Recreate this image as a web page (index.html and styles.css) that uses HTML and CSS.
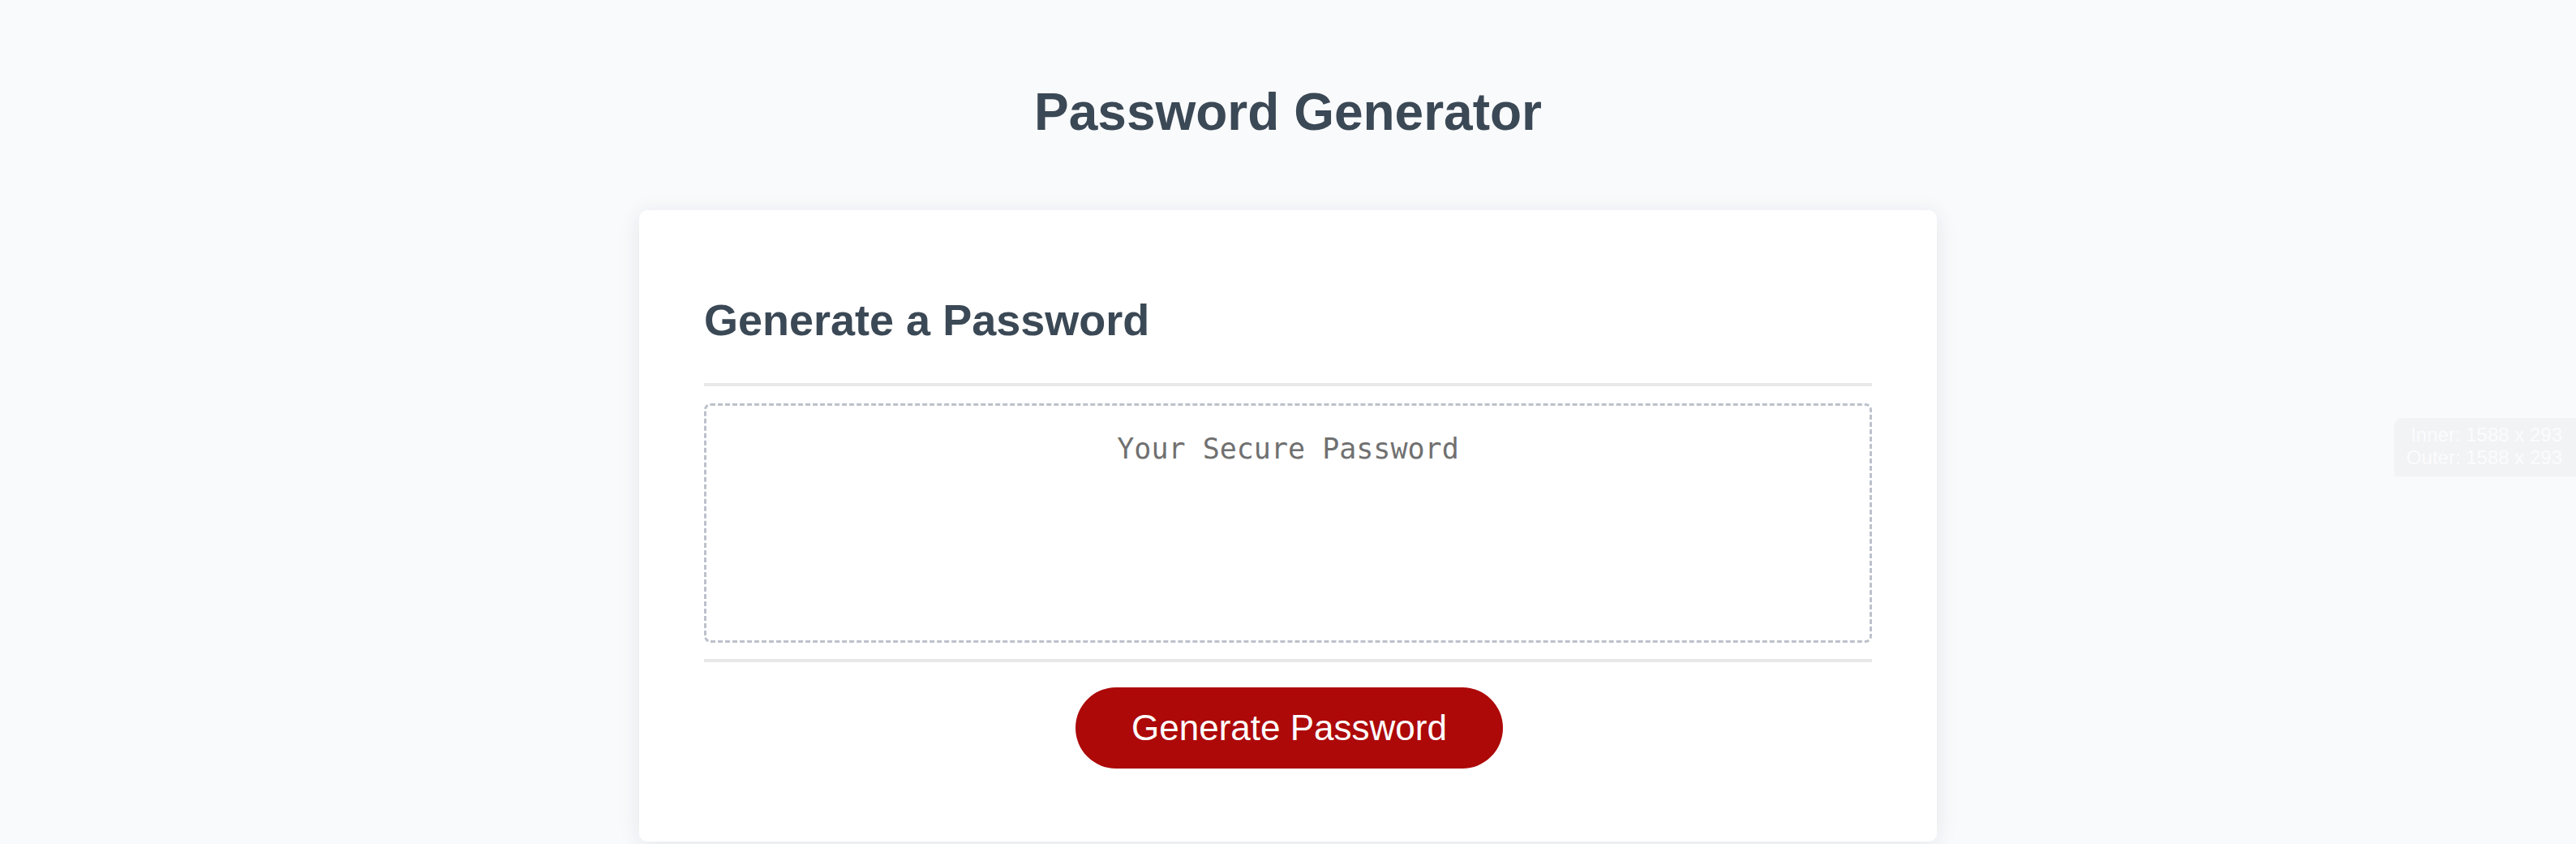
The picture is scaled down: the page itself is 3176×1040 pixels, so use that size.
FILE: index.html
```html
<!DOCTYPE html>
<html lang="en">
<head>
<meta charset="utf-8">
<title>Password Generator</title>
<link rel="stylesheet" href="styles.css">
</head>
<body>
<div class="size-overlay">
  <div>Inner: 1588 x 293</div>
  <div>Outer: 1588 x 293</div>
</div>
<header class="page-header">
  <h1 class="page-title">Password Generator</h1>
</header>
<main class="card">
  <h2 class="card-title">Generate a Password</h2>
  <div class="divider"></div>
  <div class="password-box" id="password">Your Secure Password</div>
  <div class="divider divider-bottom"></div>
  <button class="generate-btn" type="button">Generate Password</button>
</main>
</body>
</html>
```

FILE: styles.css
```css
html, body {
  margin: 0;
  padding: 0;
}

body {
  background: #f9fafc;
  font-family: "Liberation Sans", Arial, sans-serif;
  color: #3b4855;
  min-height: 1040px;
  overflow: hidden;
}

.page-header {
  padding-top: 100px;
}

.page-title {
  margin: 0;
  font-size: 64px;
  line-height: 1.2;
  font-weight: 700;
  text-align: center;
  color: #3b4855;
}

.card {
  box-sizing: border-box;
  width: 1600px;
  margin: 82px auto 0;
  padding: 80px 80px 90px;
  background: #ffffff;
  border-radius: 10px;
  box-shadow: 0 4px 28px rgba(20, 30, 50, 0.09);
  display: flex;
  flex-direction: column;
}

.card-title {
  margin: 23px 0 45px;
  font-size: 54px;
  line-height: 1.2;
  font-weight: 700;
  color: #3b4855;
}

.divider {
  height: 4px;
  background: #e8e8e8;
}

.password-box {
  box-sizing: border-box;
  margin-top: 21px;
  height: 295px;
  border: 3px dashed #bcc2ca;
  border-radius: 8px;
  padding-top: 32px;
  text-align: center;
  font-family: "DejaVu Sans Mono", "Liberation Mono", monospace;
  font-size: 35px;
  line-height: 1.2;
  color: #707070;
}

.divider-bottom {
  margin-top: 20px;
}

.generate-btn {
  align-self: center;
  margin-top: 31px;
  margin-left: 3px;
  height: 100px;
  padding: 0 69px;
  border: none;
  border-radius: 50px;
  background: #ad0909;
  color: #ffffff;
  font-family: "Liberation Sans", Arial, sans-serif;
  font-size: 44px;
  line-height: 1;
  cursor: pointer;
}

.size-overlay {
  position: absolute;
  top: 515px;
  right: 0;
  box-sizing: border-box;
  width: 224px;
  padding: 7px 17px 9px 0;
  background: #f2f3f5;
  border-radius: 10px 0 0 0;
  text-align: right;
  font-family: "Liberation Sans", Arial, sans-serif;
  font-size: 24px;
  line-height: 28px;
  color: #fcfcfd;
}
```
